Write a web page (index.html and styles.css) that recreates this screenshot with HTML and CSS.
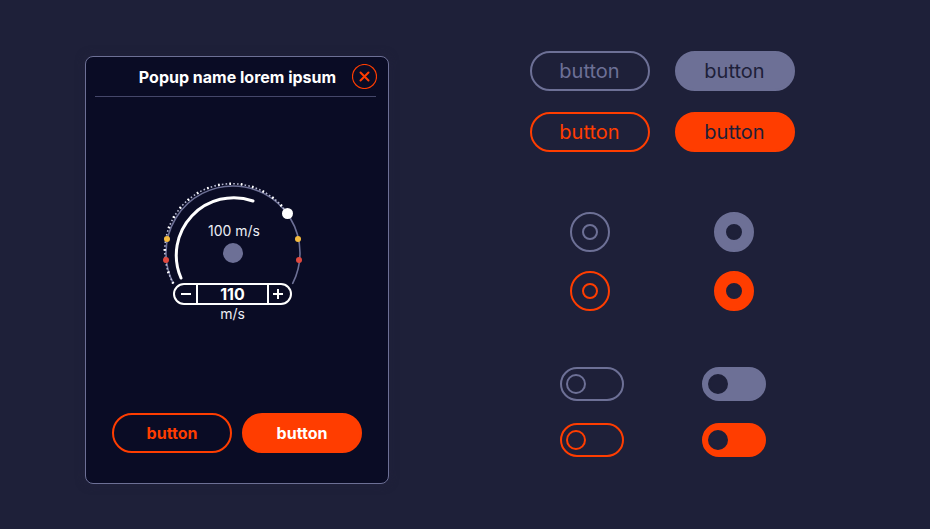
FILE: index.html
```html
<!DOCTYPE html>
<html lang="en">
<head>
<meta charset="utf-8">
<title>UI kit</title>
<link rel="stylesheet" href="styles.css">
</head>
<body>
<section class="popup">
  <header class="popup-head">
    <h1 class="popup-title">Popup name lorem ipsum</h1>
    <button class="close" aria-label="Close">
      <svg width="25" height="25" viewBox="0 0 25 25"><circle cx="12.5" cy="12.5" r="12" class="close-ring"/><path d="M8.5 8.5l8 8M16.5 8.5l-8 8" class="close-x"/></svg>
    </button>
  </header>
  <div class="gauge">
    <svg class="gauge-svg" width="140" height="145" viewBox="0 0 140 145">
      <path class="g-base" d="M10.3 103.4A67 67 0 1 1 129.7 103.4"/>
      <path class="g-dots" d="M10.3 103.4A67 67 0 0 1 124.5 33.5"/>
      <path class="g-ticks" d="M10.3 103.4A67 67 0 0 1 124.5 33.5"/>
      <path class="g-value" d="M18 98A57.5 57.5 0 0 1 90 21"/>
      <circle class="g-hub" cx="70" cy="73" r="10"/>
      <circle class="g-yellow" cx="4" cy="59" r="3"/>
      <circle class="g-yellow" cx="135" cy="59" r="3"/>
      <circle class="g-red" cx="3" cy="80" r="3"/>
      <circle class="g-red" cx="136" cy="80" r="3"/>
      <circle class="g-knob" cx="124.5" cy="33.5" r="5.5"/>
    </svg>
    <div class="readout">100 m/s</div>
    <div class="stepper">
      <span class="step">
        <svg width="12" height="12" viewBox="0 0 12 12"><path d="M1 6h10" class="step-icon"/></svg>
      </span>
      <span class="step-value">110</span>
      <span class="step step-plus">
        <svg width="12" height="12" viewBox="0 0 12 12"><path d="M1 6h10M6 1v10" class="step-icon"/></svg>
      </span>
    </div>
    <div class="unit">m/s</div>
  </div>
  <footer class="popup-actions">
    <button class="btn btn-sm btn-orange-line">button</button>
    <button class="btn btn-sm btn-orange-solid">button</button>
  </footer>
</section>

<main class="kit">
  <div class="kit-buttons">
    <button class="btn btn-lg btn-grey-line">button</button>
    <button class="btn btn-lg btn-grey-fill">button</button>
    <button class="btn btn-lg btn-orange-line">button</button>
    <button class="btn btn-lg btn-orange-fill">button</button>
  </div>
  <div class="kit-radios">
    <span class="radio radio-grey-line"><i></i></span>
    <span class="radio radio-grey-fill"><i></i></span>
    <span class="radio radio-orange-line"><i></i></span>
    <span class="radio radio-orange-fill"><i></i></span>
  </div>
  <div class="kit-toggles">
    <span class="toggle toggle-grey-line"><i></i></span>
    <span class="toggle toggle-grey-fill"><i></i></span>
    <span class="toggle toggle-orange-line"><i></i></span>
    <span class="toggle toggle-orange-fill"><i></i></span>
  </div>
</main>
</body>
</html>
```
FILE: styles.css
```css
* { box-sizing: border-box; }
html, body { height: 100%; }
body {
  margin: 0;
  overflow: hidden;
  background: #1e2039;
  color: #fff;
  font-family: Inter, "Liberation Sans", sans-serif;
  display: flex;
  align-items: flex-start;
  padding: 56px 0 0 85px;
}
button { font-family: inherit; padding: 0; cursor: pointer; }

/* popup */
.popup {
  width: 304px;
  height: 428px;
  flex: none;
  display: flex;
  flex-direction: column;
  background: #0a0c25;
  border: 1px solid #6d7096;
  border-radius: 8px;
  box-shadow: 0 0 10px rgba(33, 33, 60, .9);
  padding: 0 12px 0 9px;
}
.popup-head {
  display: flex;
  align-items: center;
  justify-content: center;
  position: relative;
  height: 40px;
  border-bottom: 1px solid #45476a;
}
.popup-title {
  margin: 0;
  font-size: 16px;
  line-height: 20px;
  font-weight: 700;
  position: relative;
  left: 2px;
}
.close {
  position: absolute;
  right: -1px;
  top: 7px;
  width: 25px;
  height: 25px;
  border: 0;
  background: none;
  display: block;
}
.close svg { display: block; }
.close-ring { fill: none; stroke: #ff3d00; stroke-width: 1.2; }
.close-x { fill: none; stroke: #ff3d00; stroke-width: 2; stroke-linecap: round; }

/* gauge */
.gauge {
  position: relative;
  width: 140px;
  height: 145px;
  margin: 83px 0 0 68px;
}
.gauge-svg { display: block; }
.g-base { fill: none; stroke: #6d7096; stroke-width: 1.6; stroke-linecap: round; }
.g-dots { fill: none; stroke: #b9bbd2; stroke-width: 1.6; stroke-dasharray: 1.6 2.2; }
.g-ticks { fill: none; stroke: #fff; stroke-width: 2.6; stroke-dasharray: 1.6 9.8; }
.g-value { fill: none; stroke: #fff; stroke-width: 3; stroke-linecap: round; }
.g-hub { fill: #6d7096; }
.g-yellow { fill: #f5bb3f; }
.g-red { fill: #e0483e; }
.g-knob { fill: #fff; }
.readout {
  position: absolute;
  left: 0;
  right: -2px;
  top: 42px;
  text-align: center;
  font-size: 14px;
  line-height: 18px;
  color: #eceef5;
}
.stepper {
  position: absolute;
  left: 10px;
  top: 103px;
  width: 119px;
  height: 22px;
  display: flex;
  background: #0a0c25;
  border: 2px solid #fff;
  border-radius: 11px;
}
.step {
  flex: none;
  width: 21px;
  display: flex;
  align-items: center;
  justify-content: center;
}
.step-plus { padding-right: 3px; }
.step-icon { fill: none; stroke: #fff; stroke-width: 2; }
.step-value {
  flex: 1;
  text-align: center;
  font-size: 16px;
  line-height: 18px;
  font-weight: 700;
  border-left: 2px solid #fff;
  border-right: 2px solid #fff;
}
.unit {
  position: absolute;
  left: 0;
  right: 1px;
  top: 125px;
  text-align: center;
  font-size: 14px;
  line-height: 18px;
  color: #eceef5;
}

.popup-actions {
  margin-top: auto;
  padding: 0 0 30px 17px;
  display: flex;
  gap: 10px;
}

/* buttons */
.btn {
  display: block;
  width: 120px;
  height: 40px;
  border-radius: 20px;
  border: 2px solid transparent;
  background: none;
  line-height: 36px;
  text-align: center;
}
.btn-sm { font-size: 16px; font-weight: 700; }
.btn-lg { font-size: 20px; font-weight: 400; padding-right: 1px; }
.btn-orange-line { border-color: #ff3d00; color: #ff3d00; }
.btn-orange-solid { background: #ff3d00; border-color: #ff3d00; color: #fff; }
.btn-grey-line { border-color: #6d7096; color: #6d7096; }
.btn-grey-fill { background: #6d7096; border-color: #6d7096; color: #1e2039; }
.btn-orange-fill { background: #ff3d00; border-color: #ff3d00; color: #1e2039; }

/* right column */
.kit {
  margin: -5px 0 0 141px;
  display: flex;
  flex-direction: column;
}
.kit-buttons {
  display: grid;
  grid-template-columns: 120px 120px;
  gap: 21px 25px;
}
.kit-radios {
  display: grid;
  grid-template-columns: 40px 40px;
  gap: 19px 104px;
  margin: 60px 0 0 40px;
}
.radio {
  width: 40px;
  height: 40px;
  border-radius: 50%;
  border: 2px solid;
  display: flex;
  align-items: center;
  justify-content: center;
}
.radio i { display: block; width: 16px; height: 16px; border-radius: 50%; border: 2px solid; }
.radio-grey-line { border-color: #6d7096; }
.radio-grey-line i { border-color: #6d7096; }
.radio-orange-line { border-color: #ff3d00; }
.radio-orange-line i { border-color: #ff3d00; }
.radio-grey-fill { border-color: #6d7096; background: #6d7096; }
.radio-grey-fill i { border-color: #1e2039; background: #1e2039; }
.radio-orange-fill { border-color: #ff3d00; background: #ff3d00; }
.radio-orange-fill i { border-color: #1e2039; background: #1e2039; }

.kit-toggles {
  display: grid;
  grid-template-columns: 64px 64px;
  gap: 22px 78px;
  margin: 56px 0 0 30px;
}
.toggle {
  width: 64px;
  height: 34px;
  border-radius: 17px;
  border: 2px solid;
  display: flex;
  align-items: center;
  padding-left: 4px;
}
.toggle i { display: block; width: 20px; height: 20px; border-radius: 50%; border: 2px solid; }
.toggle-grey-line { border-color: #6d7096; }
.toggle-grey-line i { border-color: #6d7096; }
.toggle-orange-line { border-color: #ff3d00; }
.toggle-orange-line i { border-color: #ff3d00; }
.toggle-grey-fill { border-color: #6d7096; background: #6d7096; }
.toggle-grey-fill i { border-color: #1e2039; background: #1e2039; }
.toggle-orange-fill { border-color: #ff3d00; background: #ff3d00; }
.toggle-orange-fill i { border-color: #1e2039; background: #1e2039; }
```
